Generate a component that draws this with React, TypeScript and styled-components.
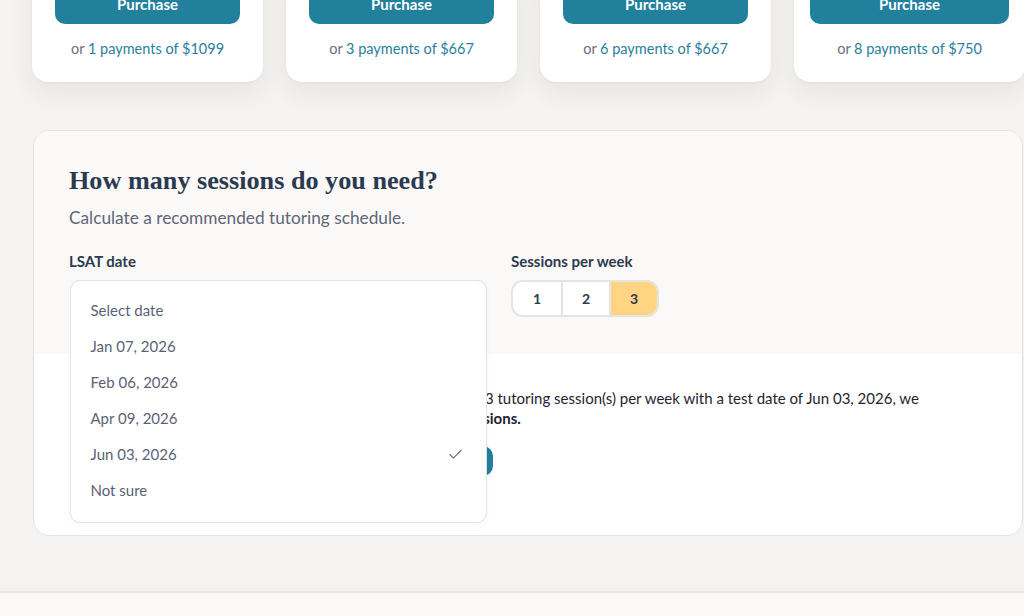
import React from "react";
import styled, { createGlobalStyle } from "styled-components";
import { Check } from "lucide-react";

const Global = createGlobalStyle`
  html, body { margin: 0; padding: 0; }
  body {
    background: #f4f3f1;
    font-family: Lato, "Open Sans", sans-serif;
    -webkit-font-smoothing: antialiased;
  }
  * { box-sizing: border-box; }
`;

const Page = styled.div`
  width: 1024px;
  height: 616px;
  overflow: hidden;
  display: flex;
  flex-direction: column;
`;

const PricingRow = styled.div`
  display: flex;
  gap: 23px;
  padding-left: 32px;
  margin-top: -40px;
`;

const PlanCard = styled.div<{ $inset: number }>`
  flex: 0 0 231px;
  background: #ffffff;
  border-radius: 16px;
  box-shadow: 0 10px 24px rgba(40, 40, 30, 0.07), 0 1px 3px rgba(0, 0, 0, 0.04);
  padding: 20px ${(p) => p.$inset}px 23px;
  display: flex;
  flex-direction: column;
  align-items: stretch;
  gap: 15px;
`;

const PurchaseButton = styled.button`
  height: 44px;
  border: none;
  border-radius: 10px;
  background: #21809c;
  color: #ffffff;
  font-family: Lato, sans-serif;
  font-weight: 700;
  font-size: 15px;
  padding: 0 0 11px;
  display: flex;
  align-items: flex-end;
  justify-content: center;
  line-height: 18px;
`;

const Installments = styled.div`
  text-align: center;
  font-size: 14.5px;
  line-height: 20px;
  color: #6b6e80;
`;

const Accent = styled.span`
  color: #2a7f9b;
`;

const CalcCard = styled.section`
  margin: 48px 0 0 33px;
  width: 990px;
  border: 1.5px solid #e4e3e1;
  border-radius: 16px;
  background: #ffffff;
`;

const CalcTop = styled.div`
  background: #faf9f7;
  border-radius: 15px 15px 0 0;
  padding: 34px 35px 37px;
`;

const Title = styled.h2`
  margin: 0;
  font-family: "Liberation Serif", "Times New Roman", serif;
  font-weight: 700;
  font-size: 26.2px;
  line-height: 31px;
  color: #2c3a50;
`;

const Subtitle = styled.p`
  margin: 10px 0 0;
  font-size: 17.25px;
  line-height: 24px;
  color: #5f6678;
`;

const FieldRow = styled.div`
  display: grid;
  grid-template-columns: 418px auto;
  column-gap: 24px;
  margin-top: 21px;
  justify-content: start;
`;

const Field = styled.div`
  display: flex;
  flex-direction: column;
  gap: 9px;
`;

const Label = styled.span`
  font-size: 15px;
  line-height: 20px;
  font-weight: 700;
  color: #2d3a4f;
`;

const SelectWrap = styled.div`
  position: relative;
  height: 37px;
  margin-left: 1px;
`;

const Trigger = styled.div`
  height: 37px;
  border: 1.5px solid #e2e2e2;
  border-radius: 10px;
  background: #ffffff;
`;

const Listbox = styled.ul`
  position: absolute;
  top: 0;
  left: 0;
  width: 100%;
  margin: 0;
  padding: 11px 0 14px;
  list-style: none;
  background: #ffffff;
  border: 1.5px solid #e3e3e3;
  border-radius: 10px;
  box-shadow: 0 2px 6px rgba(0, 0, 0, 0.03);
  z-index: 2;
`;

const Option = styled.li`
  height: 36px;
  display: flex;
  align-items: center;
  justify-content: space-between;
  padding: 0 22px 0 19.5px;
  font-size: 15px;
  color: #5b6275;
`;

const Segmented = styled.div`
  display: flex;
  height: 37px;
  border: 2px solid #e4e4e3;
  border-radius: 12px;
  overflow: hidden;
  background: #ffffff;
  align-self: flex-start;
`;

const Segment = styled.button<{ $active: boolean }>`
  width: 48px;
  border: none;
  border-left: 2px solid #e4e4e3;
  &:first-child { border-left: none; }
  background: ${(p) => (p.$active ? "#ffd483" : "#ffffff")};
  font-family: Lato, sans-serif;
  font-weight: 700;
  font-size: 14px;
  color: #2d3a4f;
  padding: 0;
`;

const CalcResult = styled.div`
  padding: 35px 35px 59px 37px;
  border-radius: 0 0 15px 15px;
`;

const ResultText = styled.p`
  margin: 0;
  max-width: 870px;
  font-size: 15px;
  line-height: 19.5px;
  color: #1f2430;
`;

const Strong = styled.strong`
  font-weight: 700;
`;

const BookButton = styled.button`
  margin-top: 18px;
  width: 422px;
  height: 30px;
  border: none;
  border-radius: 10px;
  background: #21809c;
  color: #ffffff;
  font-family: Lato, sans-serif;
  font-weight: 700;
  font-size: 14px;
`;

const Footer = styled.footer`
  margin-top: 55px;
  border-top: 2px solid #e7e6e4;
  background: #faf9f7;
  flex: 1;
`;

const plans = [
  { n: 1, amt: 1099, inset: 23 },
  { n: 3, amt: 667, inset: 23 },
  { n: 6, amt: 667, inset: 23 },
  { n: 8, amt: 750, inset: 16 },
];

const dates = ["Select date", "Jan 07, 2026", "Feb 06, 2026", "Apr 09, 2026", "Jun 03, 2026", "Not sure"];

export default function App() {
  return (
    <Page>
      <Global />
      <PricingRow>
        {plans.map((p) => (
          <PlanCard key={p.n} $inset={p.inset}>
            <PurchaseButton>Purchase</PurchaseButton>
            <Installments>
              or <Accent>{p.n} payments of ${p.amt}</Accent>
            </Installments>
          </PlanCard>
        ))}
      </PricingRow>

      <CalcCard>
        <CalcTop>
          <Title>How many sessions do you need?</Title>
          <Subtitle>Calculate a recommended tutoring schedule.</Subtitle>
          <FieldRow>
            <Field>
              <Label>LSAT date</Label>
              <SelectWrap>
                <Trigger />
                <Listbox>
                  {dates.map((d) => (
                    <Option key={d}>
                      {d}
                      {d === "Jun 03, 2026" && <Check size={17} strokeWidth={1.6} color="#6b7080" />}
                    </Option>
                  ))}
                </Listbox>
              </SelectWrap>
            </Field>
            <Field>
              <Label>Sessions per week</Label>
              <Segmented>
                {[1, 2, 3].map((n) => (
                  <Segment key={n} $active={n === 3}>
                    {n}
                  </Segment>
                ))}
              </Segmented>
            </Field>
          </FieldRow>
        </CalcTop>
        <CalcResult>
          <ResultText>
            Based on your goals and the time before test day, if you attend 3 tutoring session(s) per week with a test date of Jun 03, 2026, we{" "}
            <Strong>recommend a total of 60 expert one-on-one LSAT tutoring sessions.</Strong>
          </ResultText>
          <BookButton>Book 60 sessions</BookButton>
        </CalcResult>
      </CalcCard>

      <Footer />
    </Page>
  );
}
